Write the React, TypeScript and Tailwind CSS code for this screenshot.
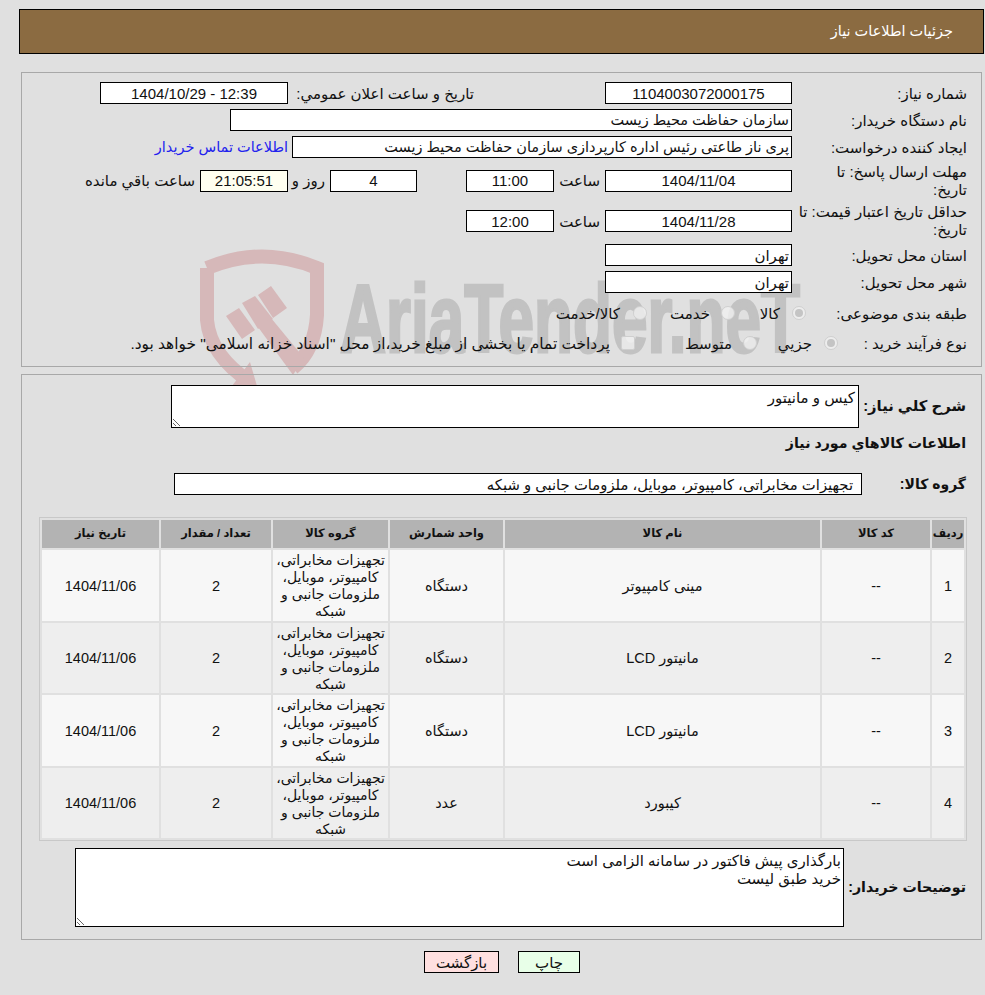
const font = "font-['Liberation_Sans','DejaVu_Sans',sans-serif]";

const rows = [
  { id: 1, name: "مینی کامپیوتر", unit: "دستگاه", bg: "bg-[#f7f7f7]" },
  { id: 2, name: "مانیتور LCD", unit: "دستگاه", bg: "bg-[#eeeeee]" },
  { id: 3, name: "مانیتور LCD", unit: "دستگاه", bg: "bg-[#f7f7f7]" },
  { id: 4, name: "کیبورد", unit: "عدد", bg: "bg-[#eeeeee]" },
];

function Box({ className = "", bg = "bg-white", children }: { className?: string; bg?: string; children?: React.ReactNode }) {
  return (
    <div className={`flex h-[22px] shrink-0 items-center border border-black pt-[2px] whitespace-nowrap ${bg} ${className}`}>
      {children}
    </div>
  );
}

function Label({ className = "", children }: { className?: string; children?: React.ReactNode }) {
  return <div className={`shrink-0 pt-[2px] whitespace-nowrap ${className}`}>{children}</div>;
}

function Radio({ on }: { on?: boolean }) {
  return (
    <span className="flex size-[14px] shrink-0 items-center justify-center rounded-full border border-[#cfcfcf] bg-[#f0f0f0]/80">
      {on && <span className="size-[8px] rounded-full bg-[#c4c4c4]" />}
    </span>
  );
}

function Watermark() {
  return (
    <svg dir="ltr" className="absolute top-0 left-0" width="985" height="400" viewBox="0 0 985 400">
      <g fill="none" stroke="#d6b8b9" strokeWidth="14">
        <path d="M207 268 Q262 245 317 268 L317 315 Q315 350 293 368" />
        <path d="M207 268 L207 320 Q210 355 250 382" />
      </g>
      <g fill="#d6b8b9">
        <polygon points="226,316 239,308 255,330 242,339" />
        <polygon points="242,303 255,296 273,319 258,329" />
        <polygon points="258,295 271,286 287,308 273,318" />
        <polygon points="258,327 271,318 304,358 293,375 282,360" />
        <polygon points="232,386 257,386 250,362" />
      </g>
      <text
        x="340"
        y="352"
        direction="ltr"
        fill="#c2c2c2"
        stroke="#c2c2c2"
        strokeWidth="3"
        fontFamily="Liberation Sans"
        fontWeight="700"
        fontSize="96"
        textLength="460"
        lengthAdjust="spacingAndGlyphs"
      >
        AriaTender.neT
      </text>
    </svg>
  );
}

export default function App() {
  return (
    <div dir="rtl" className={`relative h-[995px] overflow-hidden bg-[#e0e0e0] text-[15px] text-[#111] ${font}`}>
      <Watermark />

      <div className="relative">
        {/* header */}
        <div className="mt-[9px] mr-px ml-[19px] flex h-[45px] items-center border border-black bg-[#8b6b41] pr-[30px] text-[14.5px] text-white">
          جزئیات اطلاعات نیاز
        </div>

        {/* main info */}
        <div className="mt-[18px] mr-[3px] ml-[21px] h-[295px] border border-[#a8a8a8] pt-[9px] pr-[14px]">
          <div className="flex h-[22px] items-center">
            <Label className="w-[175px]">شماره نیاز:</Label>
            <Box className="w-[187px] justify-center">1104003072000175</Box>
            <Label className="mr-[131px] w-[186px]">تاریخ و ساعت اعلان عمومي:</Label>
            <Box className="w-[188px] justify-center">12:39 - 1404/10/29</Box>
          </div>

          <div className="mt-[5px] flex h-[22px] items-center">
            <Label className="w-[175px]">نام دستگاه خریدار:</Label>
            <Box className="w-[562px] pr-[2px] text-[14.5px]">سازمان حفاظت محیط زیست</Box>
          </div>

          <div className="mt-[5px] flex h-[22px] items-center">
            <Label className="w-[175px]">ایجاد کننده درخواست:</Label>
            <Box className="w-[500px] pr-[2px] text-[14.5px]">پری ناز طاعتی رئیس اداره کارپردازی سازمان حفاظت محیط زیست</Box>
            <a className="mr-[4px] pt-[2px] text-[14.5px] text-[#2222ee]">اطلاعات تماس خریدار</a>
          </div>

          <div className="mt-[5px] flex h-[35px] items-center">
            <div className="w-[175px] shrink-0 leading-[18px]">
              مهلت ارسال پاسخ: تا
              <br />
              تاریخ:
            </div>
            <Box className="w-[187px] justify-center">1404/11/04</Box>
            <Label className="mr-[5px] w-[46px]">ساعت</Label>
            <Box className="w-[88px] justify-center">11:00</Box>
            <Box className="mr-[49px] w-[87px] justify-center">4</Box>
            <Label className="mr-[5px] w-[37px]">روز و</Label>
            <Box className="w-[88px] justify-center" bg="bg-[#fffff0]">21:05:51</Box>
            <Label className="mr-[5px]">ساعت باقي مانده</Label>
          </div>

          <div className="mt-[5px] flex h-[36px] items-center">
            <div className="w-[175px] shrink-0 leading-[18px] whitespace-nowrap">
              حداقل تاریخ اعتبار قیمت: تا
              <br />
              تاریخ:
            </div>
            <Box className="w-[187px] justify-center">1404/11/28</Box>
            <Label className="mr-[5px] w-[46px]">ساعت</Label>
            <Box className="w-[88px] justify-center">12:00</Box>
          </div>

          <div className="mt-[5px] flex h-[22px] items-center">
            <Label className="w-[175px]">استان محل تحویل:</Label>
            <Box className="w-[187px] pr-[2px]">تهران</Box>
          </div>

          <div className="mt-[5px] flex h-[22px] items-center">
            <Label className="w-[175px]">شهر محل تحویل:</Label>
            <Box className="w-[187px] pr-[2px]">تهران</Box>
          </div>

          <div className="mt-[9px] flex h-[22px] items-center">
            <Label className="w-[161px]">طبقه بندی موضوعی:</Label>
            <Radio on />
            <Label className="mr-[12px] w-[45px]">کالا</Label>
            <Radio />
            <Label className="mr-[11px] w-[63px]">خدمت</Label>
            <Radio />
            <Label className="mr-[13px]">کالا/خدمت</Label>
          </div>

          <div className="mt-[8px] flex h-[22px] items-center">
            <Label className="w-[129px]">نوع فرآیند خرید :</Label>
            <Radio on />
            <Label className="mr-[12px] w-[55px]">جزيي</Label>
            <Radio />
            <Label className="mr-[11px] w-[97px]">متوسط</Label>
            <span className="size-[14px] shrink-0 rounded-[2px] border border-[#cfcfcf] bg-[#f0f0f0]/80" />
            <Label className="mr-[11px] text-[15.4px]">
              پرداخت تمام یا بخشی از مبلغ خرید،از محل "اسناد خزانه اسلامی" خواهد بود.
            </Label>
          </div>
        </div>

        {/* need details */}
        <div className="mt-[7px] mr-[3px] ml-[21px] h-[566px] border border-[#a8a8a8] pt-[10px] pr-[15px]">
          <div className="flex items-center">
            <div className="w-[107px] shrink-0 text-[14.8px] font-bold whitespace-nowrap">شرح کلي نیاز:</div>
            <textarea
              readOnly
              defaultValue="کیس و مانیتور"
              className="block h-[43px] w-[688px] border border-black bg-white px-[3px] py-[3px] text-[15px] leading-[17px] outline-none"
            />
          </div>

          <div className="mt-[6px] text-[14.2px] leading-[18px] font-bold">اطلاعات کالاهاي مورد نیاز</div>

          <div className="mt-[21px] flex items-center">
            <div className="w-[104px] shrink-0 text-[14px] font-bold">گروه کالا:</div>
            <Box className="w-[688px] pr-[8px] text-[14.8px]">تجهیزات مخابراتی، کامپیوتر، موبایل، ملزومات جانبی و شبکه</Box>
          </div>

          <table className="mt-[22px] -mr-[1px] w-[928px] table-fixed border-separate border-spacing-[2px] border border-[#c8c8c8] text-center text-[14.5px]">
            <colgroup>
              <col className="w-[32px]" />
              <col className="w-[108px]" />
              <col className="w-[315px]" />
              <col className="w-[113px]" />
              <col className="w-[115px]" />
              <col className="w-[110px]" />
              <col className="w-[117px]" />
            </colgroup>
            <thead>
              <tr className="h-[28px] bg-[#b3b3b3] text-[11.5px] font-bold">
                <th>ردیف</th>
                <th>کد کالا</th>
                <th>نام کالا</th>
                <th>واحد شمارش</th>
                <th>گروه کالا</th>
                <th>تعداد / مقدار</th>
                <th>تاریخ نیاز</th>
              </tr>
            </thead>
            <tbody>
              {rows.map((r) => (
                <tr key={r.id} className={`h-[70.5px] ${r.bg}`}>
                  <td className="pt-[3px]">{r.id}</td>
                  <td className="pt-[3px]">--</td>
                  <td className="pt-[3px]">{r.name}</td>
                  <td className="pt-[3px]">{r.unit}</td>
                  <td className="pt-[2px] text-[14px] leading-[17px] whitespace-nowrap">
                    تجهیزات مخابراتی،
                    <br />
                    کامپیوتر، موبایل،
                    <br />
                    ملزومات جانبی و
                    <br />
                    شبکه
                  </td>
                  <td className="pt-[3px]">2</td>
                  <td className="pt-[3px]">1404/11/06</td>
                </tr>
              ))}
            </tbody>
          </table>

          <div className="mt-[7px] flex items-center">
            <div className="w-[122px] shrink-0 text-[14.2px] font-bold whitespace-nowrap">توضیحات خریدار:</div>
            <textarea
              readOnly
              defaultValue={"بارگذاری پیش فاکتور در سامانه الزامی است\nخرید طبق لیست"}
              className="block h-[79px] w-[769px] border border-black bg-white px-[2px] py-[3px] text-[15px] leading-[18px] outline-none"
            />
          </div>
        </div>

        {/* actions */}
        <div className="mt-[11px] flex justify-center gap-[19px] pl-[19px]">
          <button className="h-[22px] w-[62px] border border-black bg-[#e8ffe8]">چاپ</button>
          <button className="h-[22px] w-[75px] border border-black bg-[#ffe0e0]">بازگشت</button>
        </div>
      </div>
    </div>
  );
}
